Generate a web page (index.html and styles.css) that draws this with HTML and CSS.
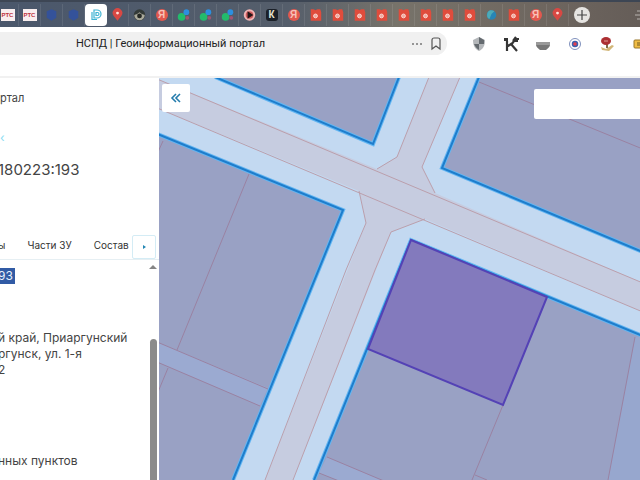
FILE: index.html
```
<!DOCTYPE html>
<html lang="ru">
<head>
<meta charset="utf-8">
<title>НСПД | Геоинформационный портал</title>
<link rel="stylesheet" href="styles.css">
</head>
<body>
<svg class="defs" aria-hidden="true">
  <symbol id="flag" viewBox="0 0 22 22"><path d="M6 7l5-2 5 2v7l-5 3-5-3z" fill="#34529a"/></symbol>
  <symbol id="nspd" viewBox="0 0 22 22"><path d="M9 6h3a4 4 0 0 1 0 8H9zM7 8v7.500h5M11 8.500v3h1.500a1.500 1.500 0 0 0 0-3z" fill="none" stroke="#3eb3d3" stroke-width="1.200"/></symbol>
  <symbol id="pin" viewBox="0 0 22 22"><path d="M11 17L7 12a5 5 0 1 1 8 0z" fill="#d84843"/><circle cx="11" cy="9" r="1.5" fill="#ffe0d8"/></symbol>
  <symbol id="emblem" viewBox="0 0 22 22"><circle cx="11" cy="11" r="6" fill="#333a38"/><path d="M5.500 11a5.500 5.500 0 0 0 11 0l-3-1-2.500-2-2.500 2z" fill="#aaa99b"/><circle cx="11" cy="12" r="2.500" fill="#242824"/></symbol>
  <symbol id="dots" viewBox="0 0 22 22"><circle cx="9" cy="13" r="4" fill="#23bb6c"/><circle cx="14" cy="8" r="3" fill="#2c8fe0"/><circle cx="15" cy="14" r="2" fill="#a05472"/></symbol>
  <symbol id="play" viewBox="0 0 22 22"><circle cx="11" cy="11" r="6" fill="#efb5b5"/><circle cx="11" cy="11" r="4" fill="#d05a5c"/><path d="M9 7l6 4-6 4z" fill="#241416"/></symbol>
  <symbol id="red" viewBox="0 0 22 22"><path d="M6 5h3l2 1 2-1h3l1 3v9H6z" fill="#e04c3c"/><circle cx="11" cy="12" r="2" fill="#f1a89e" stroke="#fbd8d2"/></symbol>
  <symbol id="globe" viewBox="0 0 22 22"><circle cx="11" cy="11" r="5" fill="#2785b6"/><path d="M7 8c2-3 5-2 7-1l-3 3-2 5c-3-1-3-4-2-7z" fill="#4cabb8"/></symbol>
</svg>

<header class="browser">
  <nav class="tabs" aria-label="Вкладки">
    <span class="tab"><b class="rts">РТС</b></span>
    <span class="tab"><b class="rts">РТС</b></span>
    <svg class="tab"><use href="#flag"/></svg>
    <svg class="tab"><use href="#flag"/></svg>
    <svg class="tab active"><use href="#nspd"/></svg>
    <svg class="tab"><use href="#pin"/></svg>
    <svg class="tab"><use href="#emblem"/></svg>
    <span class="tab"><b class="ya">Я</b></span>
    <svg class="tab"><use href="#dots"/></svg>
    <svg class="tab"><use href="#dots"/></svg>
    <svg class="tab"><use href="#dots"/></svg>
    <svg class="tab"><use href="#play"/></svg>
    <span class="tab"><b class="ka">К</b></span>
    <span class="tab"><b class="ya">Я</b></span>
    <svg class="tab"><use href="#red"/></svg>
    <svg class="tab"><use href="#red"/></svg>
    <svg class="tab"><use href="#red"/></svg>
    <svg class="tab"><use href="#red"/></svg>
    <svg class="tab"><use href="#red"/></svg>
    <svg class="tab"><use href="#red"/></svg>
    <svg class="tab"><use href="#red"/></svg>
    <svg class="tab"><use href="#red"/></svg>
    <svg class="tab"><use href="#globe"/></svg>
    <svg class="tab"><use href="#red"/></svg>
    <span class="tab"><b class="ya">Я</b></span>
    <svg class="tab"><use href="#pin"/></svg>
    <button class="new-tab" aria-label="Новая вкладка"><svg width="16" height="16" viewBox="0 0 16 16"><path d="M8 3v10M3 8h10" stroke="#444" stroke-width="1.2"/></svg></button>
    <svg class="menu" viewBox="0 0 8 12"><path d="M5 2h3M3 6h5M5 10h3" stroke="#b8b3ae" stroke-width="1"/></svg>
  </nav>
  <div class="toolbar">
    <div class="address">
      <span class="page-title">НСПД | Геоинформационный портал</span>
      <button class="icon-btn" aria-label="Ещё"><svg width="14" height="16" viewBox="0 0 14 16"><g fill="#777"><circle cx="3" cy="8" r="1"/><circle cx="7" cy="8" r="1"/><circle cx="11" cy="8" r="1"/></g></svg></button>
      <button class="icon-btn" aria-label="Закладка"><svg width="12" height="16" viewBox="0 0 12 16"><path d="M2 4a2 2 0 0 1 2-2h4a2 2 0 0 1 2 2v9l-4-3-4 3z" fill="none" stroke="#555" stroke-width="1.2"/></svg></button>
    </div>
    <div class="extensions">
      <svg viewBox="0 0 16 16"><path d="M8 1l6 3c0 6-2 9-6 11C4 13 2 10 2 4z" fill="#b4b7ba"/><path d="M8 1l5 3v4H8zM8 8v6C5 12 4 10 3 8z" fill="#646a6f"/></svg>
      <svg viewBox="0 0 16 16"><path d="M1 2h4v3H1z" fill="#353535"/><path d="M4 5v10M5 10l3-2 6 7M8 9l3-4h4M10 5l3-4M12 3h4" fill="none" stroke="#353535" stroke-width="2.200"/></svg>
      <svg viewBox="0 0 16 16"><path d="M1 6h14v3c0 2-2 3-4 5H5C3 12 1 11 1 9z" fill="#777"/><path d="M1 6h14v3H1z" fill="#999"/></svg>
      <svg viewBox="0 0 16 16"><circle cx="8" cy="8" r="5.500" fill="#fff" stroke="#8091bd"/><circle cx="8" cy="8" r="2.500" fill="#e6404d" stroke="#3e5fad" stroke-width="1.500"/></svg>
      <svg viewBox="0 0 16 16"><path d="M2 11l5 2 6-4 2 1-5 5-7-1z" fill="#d2b678"/><path d="M8 8v4" stroke="#7f6a49" stroke-width="2"/><ellipse cx="7" cy="5" rx="5" ry="4" fill="#ac2f32"/><path d="M5 5h4" stroke="#df9c93"/></svg>
      <svg viewBox="0 0 16 16"><rect x="3" y="4" width="12" height="8" rx="1" fill="#f0bd45" stroke="#99762a"/><path d="M6 7h6M6 9h6" stroke="#72581e"/></svg>
    </div>
  </div>
</header>

<main class="app">
  <aside class="panel">
    <p class="brand">ртал</p>
    <a class="crumb" href="#top" aria-label="Назад">‹</a>
    <div class="record">
      <h1 class="number">180223:193</h1>
      <nav class="sections">
        <a class="part" href="#o">ы</a>
        <a class="part" href="#p">Части ЗУ</a>
        <a class="part" href="#s">Состав</a>
        <button class="next" aria-label="Далее"><svg width="6" height="8" viewBox="0 0 6 8"><path d="M2 2l3 2-3 2z" fill="#2387b4"/></svg></button>
      </nav>
      <div class="scroll-area">
        <div class="details">
          <mark class="selected">93</mark>
          <p class="location">й край, Приаргунский<br>ргунск, ул. 1-я<br>2</p>
          <p class="category">нных пунктов</p>
        </div>
        <div class="scrollbar"><span class="arrow"></span><span class="thumb"></span></div>
      </div>
    </div>
  </aside>

  <section class="map">
    <svg class="map-canvas" viewBox="159 78 481 402" preserveAspectRatio="xMinYMin slice" role="img" aria-label="Карта участков">
      <rect x="159" y="78" width="481" height="402" fill="#c3d9f1"/>
      <g class="road">
        <path d="M150 76L377 169L397 157L429 77H460L422 167L435 193L650 286V315L425 219L391 232L293 480H265L366 223L359 191L150 105Z"/>
      </g>
      <g fill="#99a1c4">
        <path d="M215 77L373 144L399 77Z"/>
        <path d="M479 77L442 168L650 255V70Z"/>
        <path d="M150 131L343 210L233 480H150Z"/>
        <path d="M411 240L650 339V490H310Z"/>
      </g>
      <g fill="#9baad1">
        <path d="M150 339L268 388L260 406L150 359Z"/>
        <path d="M327 457L384 481H339L319 473Z"/>
        <path d="M635 337L608 480H640V337Z" fill="#97a7ce"/>
      </g>
      <g class="boundary">
        <path d="M150 76L650 286M150 105L650 315"/>
        <path d="M377 169L397 157L429 77M460 77L422 167L435 193"/>
        <path d="M359 191L366 223L346 270L265 480M425 219L391 232L375 270L293 480"/>
      </g>
      <g class="boundary inner">
        <path d="M479 82L650 152"/>
        <path d="M249 174L177 350M163 141L158 152M168 368L158 392"/>
        <path d="M150 339L268 389M150 359L260 406"/>
        <path d="M503 405L472 480M475 475L487 480M635 337L608 480"/>
        <path d="M327 457L384 481M319 473L339 481"/>
      </g>
      <g class="block-glow">
        <path d="M215 77L373 144L399 77M479 77L442 168L650 255M150 131L343 210L233 480M650 339L411 240L314 480"/>
      </g>
      <g class="block-line">
        <path d="M215 77L373 144L399 77M479 77L442 168L650 255M150 131L343 210L233 480M650 339L411 240L314 480"/>
      </g>
      <path class="parcel" d="M411 240L547 297L503 405L368 349Z"/>
    </svg>
    <button class="collapse" aria-label="Свернуть панель"><svg width="12" height="12" viewBox="0 0 12 12"><path d="M6 2L2 6l4 4M10 2L6 6l4 4" fill="none" stroke="#247cad" stroke-width="1.6"/></svg></button>
    <input class="search" type="text" aria-label="Поиск">
  </section>
</main>
</body>
</html>
```
FILE: styles.css
```
* { box-sizing: border-box; }
html, body { height: 100%; }
body {
  margin: 0;
  display: flex;
  flex-direction: column;
  overflow: hidden;
  background: #fff;
  color: #444;
  font: 12px/16px Inter, "Liberation Sans", sans-serif;
}
p, h1 { margin: 0; }
button { padding: 0; border: 0; background: none; display: grid; place-items: center; }
a { color: inherit; text-decoration: none; }
.defs { position: absolute; width: 0; height: 0; }

.browser { border-bottom: 2px solid #f1f1f1; }
.tabs {
  display: flex;
  align-items: center;
  height: 27px;
  border-top: 2px solid #3d4654;
  padding-top: 1px;
  background: linear-gradient(90deg, #4a576b, #555e6b 45%, #77736a 62%, #6e665f 85%, #655d58);
}
.tab { flex: none; display: grid; place-items: center; width: 22px; height: 22px; border-right: 1px solid #ffffff18; }
.tab:first-child { margin-left: -3px; }
.tab.active { background: #fff; border-radius: 4px; border: 0; }
.tab b { font-family: "Liberation Sans", sans-serif; line-height: 12px; text-align: center; }
.rts { width: 14px; background: #f8eeee; color: #bd3340; font-size: 6px; }
.ya { width: 12px; border-radius: 50%; background: #e2584e; color: #f8c2b8; font-size: 10px; }
.ka { width: 12px; border-radius: 3px; background: #1b2028; color: #e9e6d4; font-size: 10px; }
.new-tab { width: 16px; height: 16px; margin-left: 5px; border-radius: 50%; background: #e6e4e1; }
.menu { width: 8px; height: 12px; margin-left: auto; }

.toolbar { display: flex; align-items: flex-start; height: 49px; padding-top: 5px; }
.address {
  flex: 1;
  display: flex;
  align-items: center;
  gap: 6px;
  height: 23px;
  padding: 0 5px 0 76px;
  border-radius: 0 12px 12px 0;
  background: #f0f0f0;
}
.page-title { flex: 1; color: #222; font: 11px/16px Roboto, "Noto Sans", sans-serif; white-space: nowrap; }
.extensions { display: flex; align-items: center; gap: 16px; height: 23px; margin-left: 24px; margin-right: -7px; }
.extensions svg { width: 16px; height: 16px; }

.app { flex: 1; display: flex; min-height: 0; }
.panel { flex: 0 0 159px; display: flex; flex-direction: column; overflow: hidden; }
.brand { padding-top: 12px; font-size: 11px; }
.crumb { margin-top: 24px; color: #8adcf2; font-size: 12px; }
.record { flex: 1; display: flex; flex-direction: column; min-height: 0; margin-left: -2px; }
.number { margin-top: 12px; font-size: 15px; line-height: 24px; font-weight: 400; }
.sections { display: flex; align-items: center; height: 26px; margin-top: 52px; border-bottom: 1px solid #e6eff3; font-size: 10px; color: #333; white-space: nowrap; }
.part { margin-right: 22px; padding-bottom: 3px; }
.part:nth-child(3) { margin-right: 0; }
.next { width: 24px; height: 24px; margin-left: auto; margin-right: 3px; border: 1px solid #d4ecf5; border-radius: 2px; background: #fff; }
.scroll-area { flex: 1; display: flex; min-height: 0; }
.details { flex: 1; padding-top: 8px; white-space: nowrap; }
.selected { display: inline-block; padding-right: 2px; background: #315ba5; color: #e8f0fc; }
.location { margin-top: 46px; }
.category { margin-top: 75px; }
.scrollbar { display: flex; flex-direction: column; align-items: center; width: 8px; margin-right: 2px; padding-top: 5px; }
.arrow { border: 4px solid transparent; border-top: 0; border-bottom: 4px solid #858585; }
.thumb { flex: 1; width: 7px; margin-top: 70px; border-radius: 4px 4px 0 0; background: #8b8b8b; }

.map { position: relative; flex: 1; min-width: 0; overflow: hidden; }
.map-canvas { display: block; width: 100%; height: 100%; }
.road { fill: #c6cce0; }
.boundary { fill: none; stroke: #bb9fac; stroke-width: 1; }
.boundary.inner { stroke: #9a82a2; }
.block-glow { fill: none; stroke: #63b6f2; stroke-width: 4; }
.block-line { fill: none; stroke: #1e7dcc; stroke-width: 2; }
.parcel { fill: #837abd; stroke: #5442b5; stroke-width: 2; }
.collapse { position: absolute; top: 6px; left: 3px; width: 28px; height: 28px; border-radius: 2px; background: #fff; }
.search { position: absolute; top: 11px; left: 78%; right: 0; width: 22%; height: 30px; border: 0; border-radius: 2px 0 0 2px; background: #fff; }
```
